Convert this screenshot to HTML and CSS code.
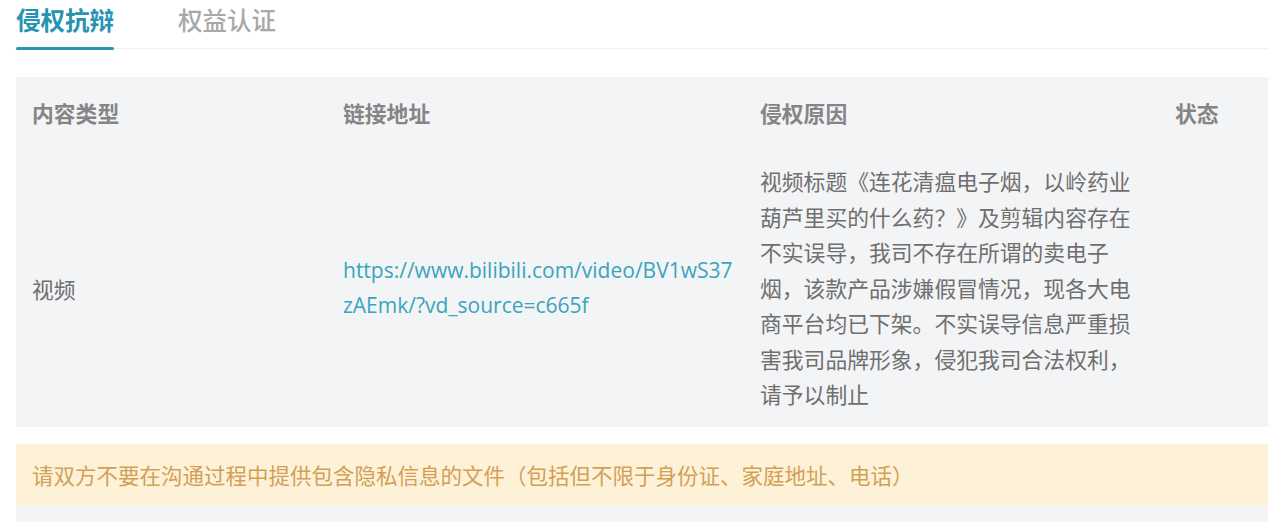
FILE: index.html
```html
<!DOCTYPE html>
<html lang="zh-CN">
<head>
<meta charset="utf-8">
<title>侵权抗辩</title>
<link rel="stylesheet" href="styles.css">
</head>
<body>
<div class="page">
  <div class="tabs">
    <div class="tab active">侵权抗辩</div>
    <div class="tab">权益认证</div>
  </div>
  <div class="table">
    <div class="row head">
      <div class="cell">内容类型</div>
      <div class="cell">链接地址</div>
      <div class="cell">侵权原因</div>
      <div class="cell">状态</div>
    </div>
    <div class="row body">
      <div class="cell">视频</div>
      <div class="cell link">https://www.bilibili.com/video/BV1wS37zAEmk/?vd_source=c665f</div>
      <div class="cell reason">视频标题《连花清瘟电子烟，以岭药业葫芦里买的什么药？》及剪辑内容存在不实误导，我司不存在所谓的卖电子烟，该款产品涉嫌假冒情况，现各大电商平台均已下架。不实误导信息严重损害我司品牌形象，侵犯我司合法权利，请予以制止</div>
      <div class="cell"></div>
    </div>
  </div>
  <div class="notice">请双方不要在沟通过程中提供包含隐私信息的文件（包括但不限于身份证、家庭地址、电话）</div>
  <div class="more"></div>
</div>
</body>
</html>
```

FILE: styles.css
```css
html, body {
  margin: 0;
  padding: 0;
  background: #ffffff;
}
body {
  font-family: "Open Sans", "Noto Sans CJK SC", sans-serif;
  color: #777;
}
.page {
  padding-left: 16px;
}
.tabs {
  display: flex;
  gap: 64px;
  height: 49px;
  border-bottom: 1px solid #f0f0f0;
  box-sizing: border-box;
  padding-top: 4px;
}
.tab {
  font-size: 24.5px;
  line-height: 34px;
  color: #a8a8a8;
  font-weight: 500;
  position: relative;
}
.tab.active {
  color: #2693b0;
  font-weight: 700;
}
.tab.active::after {
  content: "";
  position: absolute;
  left: 0;
  right: 0;
  top: 43px;
  height: 3px;
  background: #2a97b2;
  border-radius: 2px;
}
.table {
  margin-top: 28px;
  background: #f3f4f6;
}
.row {
  display: grid;
  grid-template-columns: 311px 417px 415px 1fr;
  align-items: center;
}
.cell {
  padding-left: 16px;
  font-size: 21.8px;
}
.head {
  height: 71px;
}
.head .cell {
  font-weight: 700;
  color: #858585;
}
.body {
  padding: 16px 0 14px;
}
.body .cell {
  color: #6f6f6f;
}
.link {
  color: #3aa4be !important;
  font-size: 21px;
  line-height: 35px;
  word-break: break-all;
  padding-right: 10px;
}
.reason {
  line-height: 35.5px;
  width: 380px;
  box-sizing: content-box;
}
.notice {
  margin-top: 17px;
  height: 62px;
  background: #fdf2d8;
  color: #d39f57;
  font-size: 21.5px;
  display: flex;
  align-items: center;
  padding-left: 16px;
}
.more {
  height: 20px;
  background: #f3f4f6;
}
```
